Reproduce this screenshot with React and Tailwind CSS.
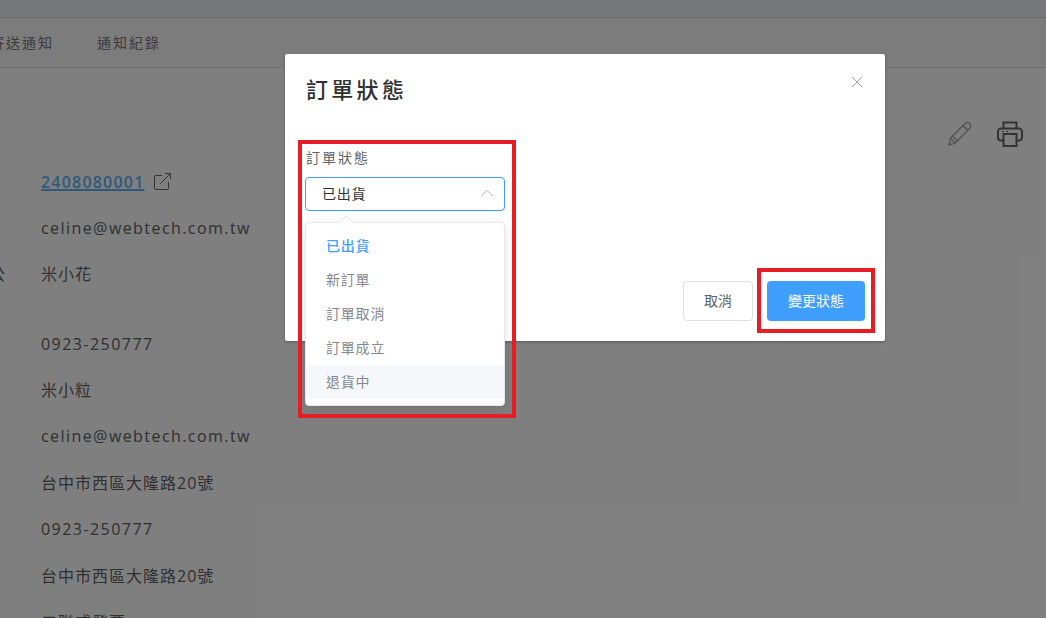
import { ChevronUp, X } from "lucide-react";

const FONT = "font-['Open_Sans','Noto_Sans_CJK_TC',sans-serif]";

const rows = [
  { text: "celine@webtech.com.tw", cls: "mt-[23px] tracking-[1.430px]" },
  { text: "米小花", cls: "mt-[23px] tracking-[1px]", label: "公" },
  { text: "0923-250777", cls: "mt-[47px] tracking-[1.450px]" },
  { text: "米小粒", cls: "mt-[23px] tracking-[1px]" },
  { text: "celine@webtech.com.tw", cls: "mt-[23px] tracking-[1.430px]" },
  { text: "台中市西區大隆路20號", cls: "mt-[24px] tracking-[1px]" },
  { text: "0923-250777", cls: "mt-[23px] tracking-[1.450px]" },
  { text: "台中市西區大隆路20號", cls: "mt-[24px] tracking-[1px]" },
  { text: "二聯式發票", cls: "mt-[23px] tracking-[1px]" },
];

const options = ["新訂單", "訂單取消", "訂單成立"];

function PencilIcon() {
  return (
    <svg width="26" height="26" viewBox="0 0 26 26" fill="none" stroke="#aaaaaa" strokeWidth="1.500" strokeLinejoin="round">
      <path d="M2 24l1.400-6.800L18 2.600c1.300-1.300 3.300-1.300 4.700 0s1.300 3.400 0 4.700L8.400 22 2 24z" />
      <path d="M3.400 17.200L8.400 22M6 15.500l4 4M16 4.600l5 5" />
    </svg>
  );
}

function PrinterIcon() {
  return (
    <svg width="26" height="26" viewBox="0 0 26 26" fill="none" stroke="#666666" strokeWidth="2">
      <path d="M6.500 8V1.500h13V8" />
      <path d="M6.500 19.500H4a3 3 0 0 1-3-3V10.500a3 3 0 0 1 3-3h18a3 3 0 0 1 3 3v6a3 3 0 0 1-3 3h-2.500" />
      <rect x="6.500" y="13" width="13" height="12" />
      <path d="M5 10.500h2M9 10.500h2" strokeWidth="1.200" />
    </svg>
  );
}

function ExternalIcon() {
  return (
    <svg width="17" height="17" viewBox="0 0 17 17" fill="none" stroke="#666666" strokeWidth="1" className="ml-[10px] -mt-[2px]">
      <path d="M8 2.500H2a1.500 1.500 0 0 0-1.500 1.500v11A1.500 1.500 0 0 0 2 16.500h11a1.500 1.500 0 0 0 1.500-1.500V9" />
      <path d="M6.500 10.500l10-10M11 .5h5.500V6" />
    </svg>
  );
}

export default function App() {
  return (
    <div className={`relative w-[1046px] h-[618px] overflow-hidden bg-white ${FONT}`}>
      {/* page behind the dialog */}
      <div className="h-[18px] bg-[#eef0f6] border-b border-[#d8d8d8]" />
      <div className="h-[50px] pt-[1px] bg-[#f8f8f8] border-b border-[#e4e4e4] flex items-center text-sm tracking-[2px] text-[#777777]">
        <span className="-ml-[10px] whitespace-nowrap">寄送通知</span>
        <span className="ml-[43px] whitespace-nowrap">通知紀錄</span>
      </div>
      <div className="bg-white pt-[102px]">
        <div className="flex justify-end gap-[24px] pr-[23px] -mt-[49px] mb-[24px]">
          <PencilIcon />
          <PrinterIcon />
        </div>
        <div className="pl-[41px] text-base leading-[23px] text-[#606060]">
          <div className="flex items-center tracking-[1.200px]">
            <span className="text-[#5ab4f5] font-semibold underline decoration-[1.500px]">2408080001</span>
            <ExternalIcon />
          </div>
          {rows.map((row, i) => (
            <div key={i} className={`flex whitespace-nowrap ${row.cls}`}>
              {row.label && <span className="-ml-[52px] w-[52px]">{row.label}</span>}
              <span>{row.text}</span>
            </div>
          ))}
        </div>
      </div>

      {/* overlay */}
      <div className="absolute inset-0 bg-black/50" />

      {/* dialog */}
      <div className="absolute left-[285px] top-[54px] w-[600px] h-[287px] flex flex-col bg-white rounded-[2px] shadow-[0_1px_3px_rgba(0,0,0,0.3)]">
        <div className="flex items-start justify-between pl-[21px] pr-[18px] pt-[20px]">
          <h2 className="text-[22px] leading-[30px] font-medium tracking-[3.300px] text-[#303133]">訂單狀態</h2>
          <X size={20} strokeWidth={1} className="text-[#8a8d93] -mt-[2px]" />
        </div>
        <div className="pl-[20px] mt-[44px] w-[220px]">
          <div className="text-sm leading-[20px] tracking-[2px] text-[#606266] pl-[1px]">訂單狀態</div>
          <div className="relative mt-[9px] w-[200px]">
            <div className="h-[34px] flex items-center justify-between pl-[16px] pr-[6px] border border-[#409eff] rounded-[4px] text-sm tracking-[.800px] text-[#303133]">
              <span>已出貨</span>
              <ChevronUp size={22} strokeWidth={1} className="text-[#a8abb2] -mt-[2px]" />
            </div>
            <div className="absolute left-0 top-[45px] w-[200px] h-[184px] py-[6px] bg-white border border-[#e4e7ed] rounded-[4px] shadow-[0_2px_12px_rgba(0,0,0,0.1)] z-10">
              <div className="absolute -top-[6px] left-[35px] w-[10px] h-[10px] rotate-45 bg-white border-l border-t border-[#e4e7ed]" />
              <div className="relative h-[34px] flex items-center pl-[20px] text-sm tracking-[.800px] font-medium text-[#409eff]">已出貨</div>
              {options.map((o) => (
                <div key={o} className="h-[34px] flex items-center pl-[20px] text-sm tracking-[.800px] text-[#85878c]">{o}</div>
              ))}
              <div className="h-[34px] flex items-center pl-[20px] text-sm tracking-[.800px] text-[#85878c] bg-[#f5f7fa]">退貨中</div>
            </div>
          </div>
        </div>
        <div className="mt-auto flex justify-end gap-[14px] pr-[20px] pb-[20px]">
          <button className="w-[70px] h-[40px] border border-[#dcdfe6] rounded-[4px] text-sm text-[#606266]">取消</button>
          <button className="w-[98px] h-[40px] bg-[#409eff] rounded-[4px] text-sm text-white">變更狀態</button>
        </div>
      </div>

      {/* annotation boxes */}
      <div className="absolute left-[298px] top-[140px] w-[218px] h-[278px] border-4 border-[#e81c24] z-20" />
      <div className="absolute left-[757px] top-[268px] w-[118px] h-[65px] border-4 border-[#e81c24] z-20" />
    </div>
  );
}
